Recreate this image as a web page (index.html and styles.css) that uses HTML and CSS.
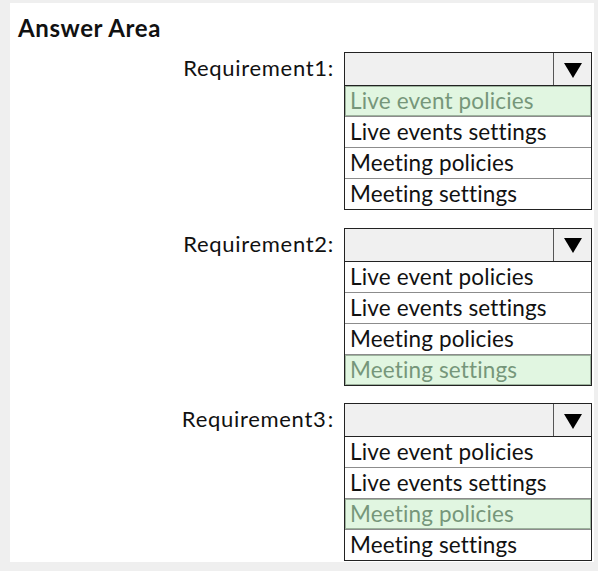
FILE: index.html
```html
<!DOCTYPE html>
<html>
  <head>
    <meta charset="UTF-8" />
    <title>Answer Area</title>
    <link rel="stylesheet" href="styles.css">
  </head>
  <body>
    <div class="panel">
      <h2 class="title">Answer Area</h2>

      <div class="req">
        <span class="req-label">Requirement1:</span>
        <div class="dropdown">
          <div class="dropdown-head">
            <span class="dropdown-value"></span>
            <span class="dropdown-arrow"></span>
          </div>
          <ul class="dropdown-list">
            <li class="option selected">Live event policies</li>
            <li class="option">Live events settings</li>
            <li class="option">Meeting policies</li>
            <li class="option">Meeting settings</li>
          </ul>
        </div>
      </div>

      <div class="req">
        <span class="req-label">Requirement2:</span>
        <div class="dropdown">
          <div class="dropdown-head">
            <span class="dropdown-value"></span>
            <span class="dropdown-arrow"></span>
          </div>
          <ul class="dropdown-list">
            <li class="option">Live event policies</li>
            <li class="option">Live events settings</li>
            <li class="option">Meeting policies</li>
            <li class="option selected">Meeting settings</li>
          </ul>
        </div>
      </div>

      <div class="req">
        <span class="req-label">Requirement3 :</span>
        <div class="dropdown">
          <div class="dropdown-head">
            <span class="dropdown-value"></span>
            <span class="dropdown-arrow"></span>
          </div>
          <ul class="dropdown-list">
            <li class="option">Live event policies</li>
            <li class="option">Live events settings</li>
            <li class="option selected">Meeting policies</li>
            <li class="option">Meeting settings</li>
          </ul>
        </div>
      </div>
    </div>
  </body>
</html>
```

FILE: styles.css
```css
html,
body {
  margin: 0;
  padding: 0;
}

body {
  background: #efefef;
  font-family: Lato, "Noto Sans", sans-serif;
  color: #111;
  width: 598px;
  height: 571px;
  overflow: hidden;
}

/* white card */
.panel {
  background: #fff;
  margin: 3px 4px 0 10px;
  height: 559px;
  padding: 0 2px 0 0;
  box-sizing: border-box;
}

.title {
  margin: 0;
  padding: 12px 0 0 8px;
  font-size: 24px;
  font-weight: bold;
  line-height: 26px;
  height: 36px;
  box-sizing: border-box;
  letter-spacing: 0.6px;
}

.req {
  display: flex;
  justify-content: flex-end;
  align-items: flex-start;
  margin-top: 13px;
}

.req + .req {
  margin-top: 17.5px;
}

.req-label {
  font-size: 22px;
  line-height: 32px;
  margin-right: 10px;
  letter-spacing: 0.7px;
  word-spacing: -5px;
}

/* dropdown */
.dropdown {
  width: 246px;
  border: 1px solid #222;
}

.dropdown-head {
  display: flex;
  height: 32px;
  background: #f0f0f0;
  border-bottom: 1px solid #222;
}

.dropdown-value {
  flex: 1;
}

.dropdown-arrow {
  width: 37px;
  border-left: 1px solid #555;
  display: flex;
  align-items: center;
  justify-content: center;
}

.dropdown-arrow::after {
  content: "";
  width: 0;
  height: 0;
  border-left: 9px solid transparent;
  border-right: 9px solid transparent;
  border-top: 15px solid #000;
  margin-top: 2px;
}

.dropdown-list {
  list-style: none;
  margin: 0;
  padding: 0;
}

.option {
  height: 30px;
  line-height: 30px;
  padding-left: 5px;
  font-size: 22.5px;
  letter-spacing: 0.15px;
  border-bottom: 1px solid #8c8c8c;
  white-space: nowrap;
}

.option:last-child {
  border-bottom: none;
}

.option.selected {
  background: #e1f6e1;
  color: #76967a;
  box-shadow: inset 0 0 0 1px #9db39d;
}
```
